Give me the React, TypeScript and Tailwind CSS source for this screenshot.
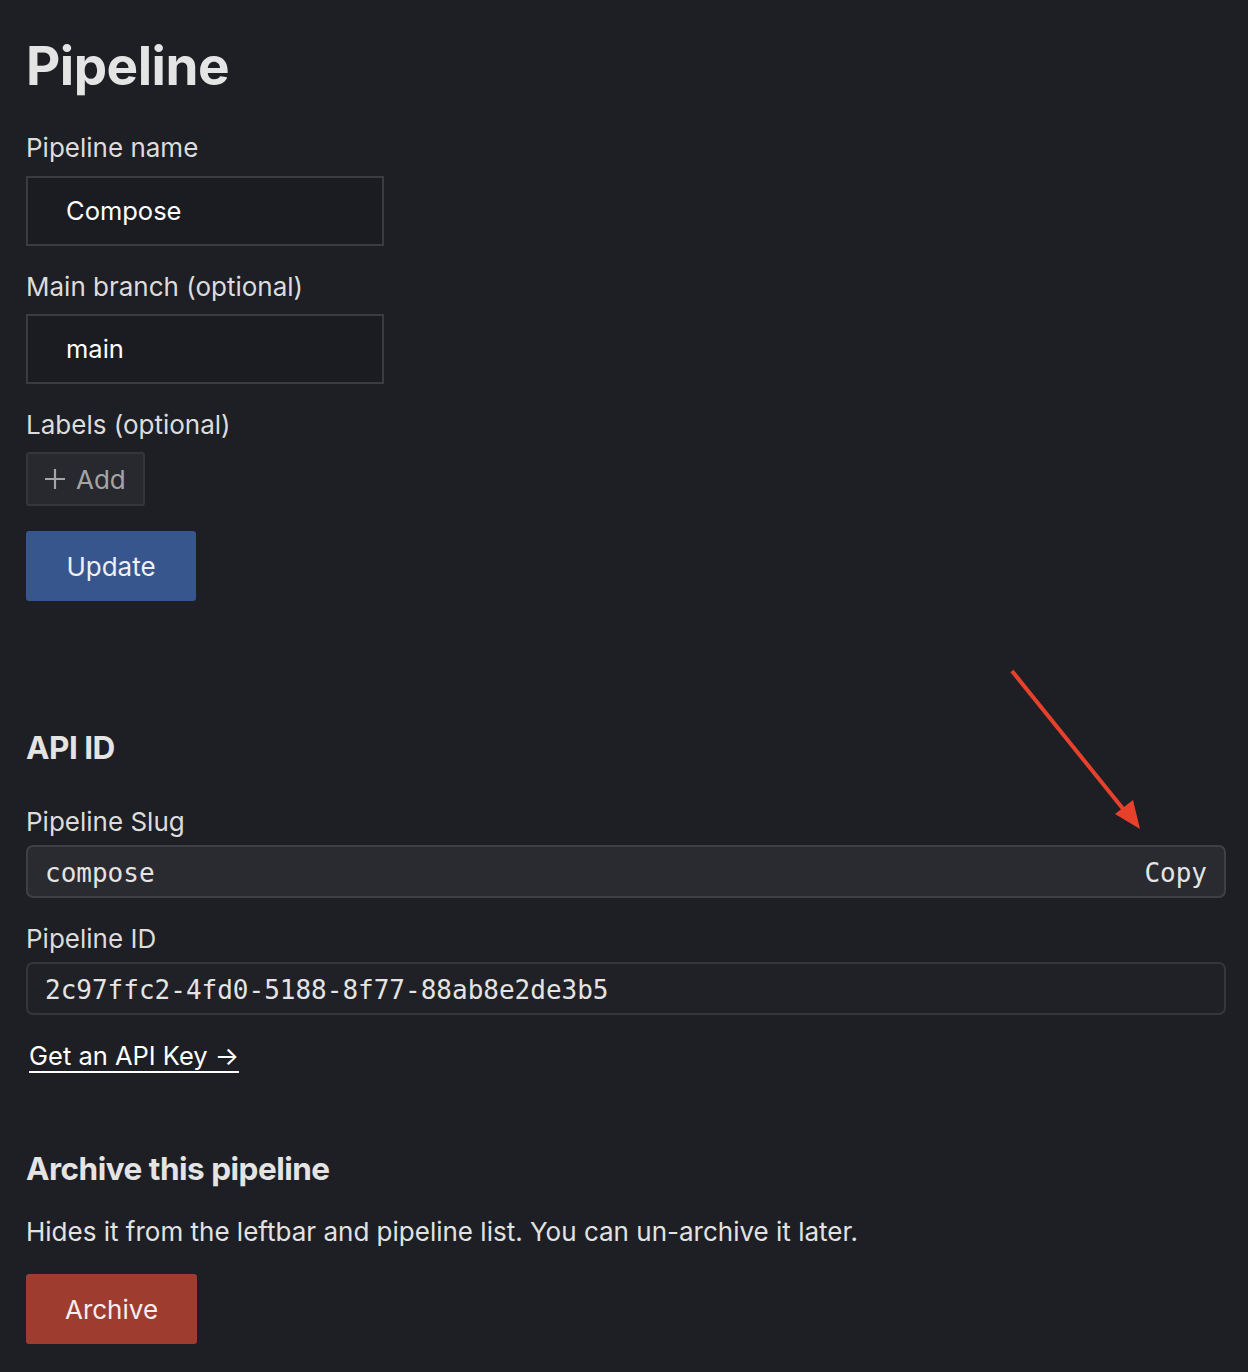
import React from "react";

const font = { fontFamily: "Inter, 'Noto Sans', sans-serif" };

const Label: React.FC<{ children: React.ReactNode }> = ({ children }) => (
  <div className="text-[26px] leading-[32px] text-[#dcdcdc]">{children}</div>
);

const App: React.FC = () => {
  return (
    <div
      className="relative min-h-[1372px] w-[1248px] bg-[#1e1f24] px-[26px] pt-[34px] pb-[28px] text-[#e2e2e2]"
      style={font}
    >
      <h1 className="text-[53px] leading-[64px] font-bold tracking-[-0.5px] text-[#e4e4e4]">
        Pipeline
      </h1>

      <div className="mt-[34px]">
        <Label>Pipeline name</Label>
        <div className="mt-[12px] flex h-[70px] w-[358px] items-center border-2 border-[#3b3c41] bg-[#1b1c21] pl-[38px] text-[25.5px] text-white">
          Compose
        </div>
      </div>

      <div className="mt-[25px]">
        <Label>Main branch (optional)</Label>
        <div className="mt-[11px] flex h-[70px] w-[358px] items-center border-2 border-[#3b3c41] bg-[#1b1c21] pl-[38px] text-[25.5px] text-white">
          main
        </div>
      </div>

      <div className="mt-[25px]">
        <Label>Labels (optional)</Label>
        <button className="mt-[11px] flex h-[54px] w-[119px] items-center gap-[10px] rounded-[3px] border-2 border-[#35363b] bg-[#28292e] pl-[16px] text-[26px] text-[#a5a5a8]">
          <svg width="22" height="22" viewBox="0 0 22 22" fill="none" stroke="#a5a5a8" strokeWidth="2.2">
            <path d="M11 1v20M1 11h20" />
          </svg>
          Add
        </button>
      </div>

      <button className="mt-[25px] block h-[70px] w-[170px] rounded-[3px] bg-[#38568e] text-[26px] text-[#eef0f5]">
        Update
      </button>

      <h2 className="mt-[127px] text-[31.5px] leading-[40px] font-bold tracking-[-0.5px] text-[#e4e4e4]">
        API ID
      </h2>

      <div className="mt-[38px]">
        <Label>Pipeline Slug</Label>
        <div className="mt-[7px] flex h-[53px] w-[1200px] items-center justify-between rounded-[7px] border-2 border-[#3f4045] bg-[#2a2b30] px-[17px] pt-[4px] font-['DejaVu_Sans_Mono',monospace] text-[26px] text-[#e4e4e4]">
          <span>compose</span>
          <span>Copy</span>
        </div>
      </div>

      <div className="mt-[25px]">
        <Label>Pipeline ID</Label>
        <div className="mt-[7px] flex h-[53px] w-[1200px] items-center rounded-[7px] border-2 border-[#35363b] bg-[#202126] pl-[17px] pt-[4px] font-['DejaVu_Sans_Mono',monospace] text-[26px] text-[#e4e4e4]">
          2c97ffc2-4fd0-5188-8f77-88ab8e2de3b5
        </div>
      </div>

      <div className="mt-[25px] flex">
        <a className="ml-[3px] block border-b-2 border-white text-[25.5px] leading-[31px] text-white">
          Get an API Key →
        </a>
      </div>

      <h2 className="mt-[76px] text-[31.5px] leading-[40px] font-bold tracking-[-0.5px] text-[#e4e4e4]">
        Archive this pipeline
      </h2>

      <p className="mt-[27px] text-[26px] leading-[32px] text-[#e2e2e2]">
        Hides it from the leftbar and pipeline list. You can un-archive it later.
      </p>

      <button className="mt-[26px] block h-[70px] w-[171px] rounded-[3px] bg-[#9f3c30] text-[26px] text-[#f4eeee]">
        Archive
      </button>

      {/* annotation arrow */}
      <svg
        className="pointer-events-none absolute left-[1000px] top-[660px]"
        width="160"
        height="180"
        viewBox="0 0 160 180"
      >
        <line x1="12" y1="11" x2="128" y2="155" stroke="#e8412b" strokeWidth="4" />
        <polygon points="140,169 115,154 133,140" fill="#e8412b" />
      </svg>
    </div>
  );
};

export default App;
